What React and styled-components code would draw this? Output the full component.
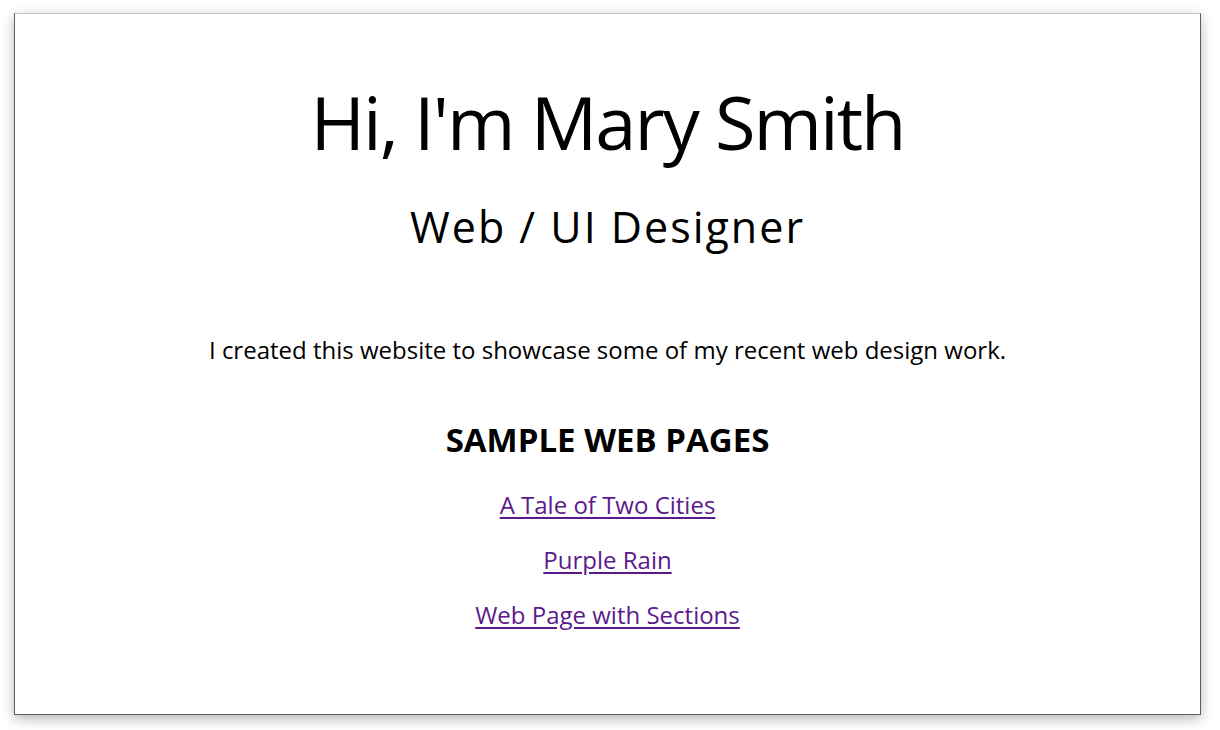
import React from "react";
import styled, { createGlobalStyle } from "styled-components";

const Global = createGlobalStyle`
  html, body { margin: 0; padding: 0; background: #ffffff; }
  body { font-family: "Open Sans", "Noto Sans", sans-serif; color: #000; }
`;

const Page = styled.div`
  width: 1220px;
  height: 730px;
  padding: 13px 20px 15px 14px;
  box-sizing: border-box;
`;

const Frame = styled.main`
  box-sizing: border-box;
  width: 1187px;
  height: 702px;
  background: #fff;
  border: 1px solid #5e5e5e;
  border-top-color: #c4c4c4;
  box-shadow: 0 4px 12px rgba(0, 0, 0, 0.28);
  display: flex;
  flex-direction: column;
  align-items: center;
  text-align: center;
`;

const Title = styled.h1`
  margin: 60px 0 0;
  font-size: 74px;
  font-weight: 400;
  line-height: 96px;
  letter-spacing: -2px;
`;

const Subtitle = styled.h2`
  margin: 27px 0 0;
  font-size: 43px;
  font-weight: 400;
  line-height: 60px;
  letter-spacing: 2px;
`;

const Intro = styled.p`
  margin: 77px 0 0;
  font-size: 24px;
  line-height: 32px;
`;

const SectionTitle = styled.h3`
  margin: 54px 0 0;
  font-size: 33px;
  font-weight: 700;
  line-height: 40px;
`;

const LinkList = styled.ul`
  list-style: none;
  margin: 29px 0 0;
  padding: 0;
  display: flex;
  flex-direction: column;
  align-items: center;
  gap: 23px;
`;

const LinkItem = styled.li`
  font-size: 24px;
  line-height: 32px;
`;

const Link = styled.a`
  color: #5b1a8c;
  text-decoration: underline;
  text-underline-offset: 3px;
`;

export default function App() {
  const links = ["A Tale of Two Cities", "Purple Rain", "Web Page with Sections"];
  return (
    <Page>
      <Global />
      <Frame>
        <Title>Hi, I'm Mary Smith</Title>
        <Subtitle>Web / UI Designer</Subtitle>
        <Intro>I created this website to showcase some of my recent web design work.</Intro>
        <SectionTitle>SAMPLE WEB PAGES</SectionTitle>
        <LinkList>
          {links.map((l) => (
            <LinkItem key={l}>
              <Link href="#">{l}</Link>
            </LinkItem>
          ))}
        </LinkList>
      </Frame>
    </Page>
  );
}
